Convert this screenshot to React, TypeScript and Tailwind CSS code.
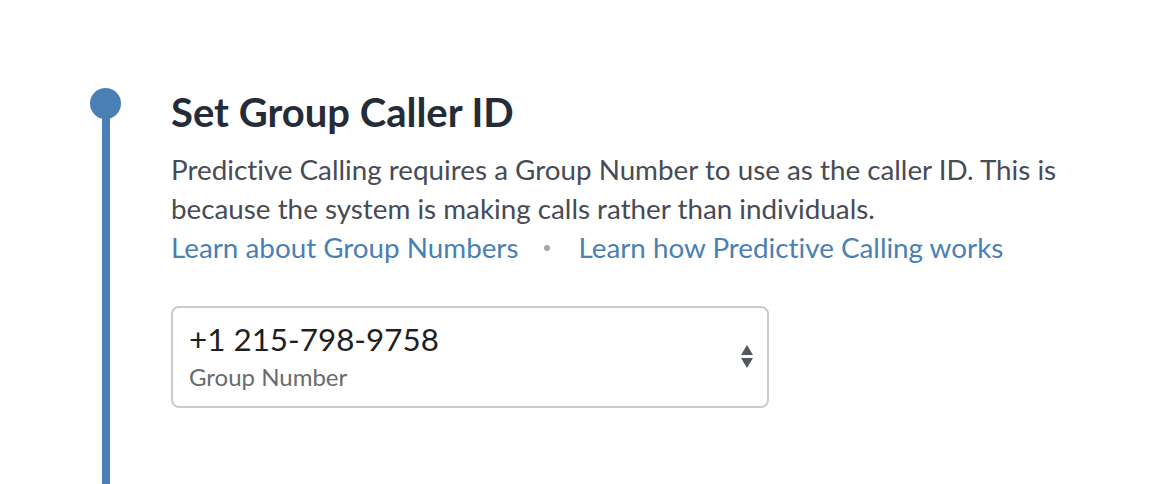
export default function App() {
  return (
    <div className="min-h-screen bg-white font-['Lato','Liberation_Sans',sans-serif] [font-variant-ligatures:none]">
      <div className="flex h-[484px]">
        {/* timeline */}
        <div className="ml-[90px] flex w-[31px] flex-col items-center pt-[88px]">
          <div className="h-[31px] w-[31px] shrink-0 rounded-full bg-[#4a7fb4]" />
          <div className="-mt-1 w-[8px] flex-1 bg-[#4a7fb4]" />
        </div>

        {/* step content */}
        <div className="ml-[50px] pt-[88px]">
          <h2 className="text-[40px] font-bold leading-[48px] text-[#262c37]">
            Set Group Caller ID
          </h2>
          <p className="mt-[14px] w-[950px] text-[27.8px] leading-[39px] text-[#474b55]">
            Predictive Calling requires a Group Number to use as the caller ID. This is
            <br />
            because the system is making calls rather than individuals.
          </p>
          <div className="flex items-center text-[27.8px] leading-[39px] text-[#4a7fb4]">
            <a href="#" className="hover:underline">
              Learn about Group Numbers
            </a>
            <span className="ml-[26px] mr-[28px] h-[6px] w-[6px] rounded-full bg-[#a3a6ab]" />
            <a href="#" className="hover:underline">
              Learn how Predictive Calling works
            </a>
          </div>

          <div className="mt-[39px] flex h-[102px] w-[598px] items-center justify-between rounded-[8px] border-2 border-[#cbcbcb] pl-[16px] pr-[14px]">
            <div className="flex flex-col self-start pt-[12px]">
              <span className="text-[31.4px] leading-[38px] text-[#1d1f22]">+1 215-798-9758</span>
              <span className="mt-[5px] text-[24px] leading-[28px] text-[#6b6b6b]">Group Number</span>
            </div>
            <svg width="12" height="24" viewBox="0 0 12 24" className="text-[#55585d]">
              <path d="M6 0 L12 10 L0 10 Z" fill="currentColor" />
              <path d="M0 13 L12 13 L6 23 Z" fill="currentColor" />
            </svg>
          </div>
        </div>
      </div>
    </div>
  );
}
